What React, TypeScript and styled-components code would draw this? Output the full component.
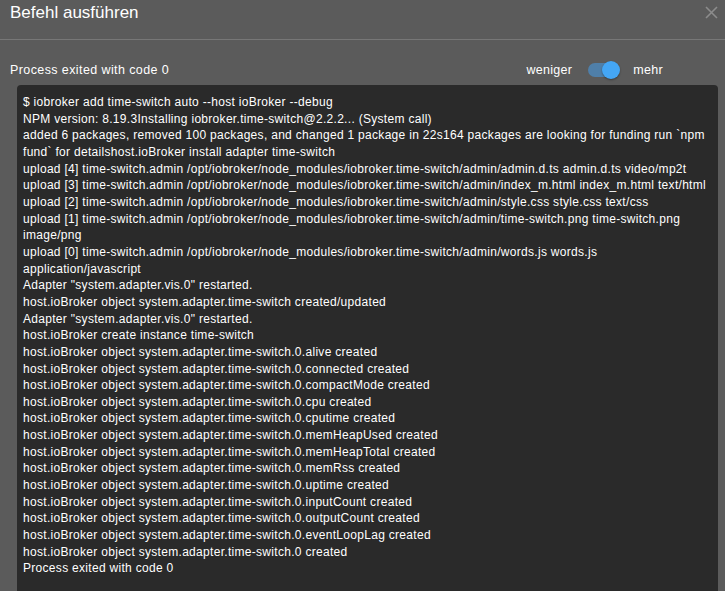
import styled, { createGlobalStyle } from 'styled-components';

const GlobalStyle = createGlobalStyle`
  html, body {
    margin: 0;
    padding: 0;
    background: #5b5b5b;
    overflow: hidden;
  }
  * { box-sizing: border-box; }
`;

const Dialog = styled.div`
  width: 725px;
  height: 591px;
  background: #5b5b5b;
  font-family: "Liberation Sans", Arial, sans-serif;
  color: #ffffff;
  display: flex;
  flex-direction: column;
  overflow: hidden;
`;

const Header = styled.div`
  height: 40px;
  border-bottom: 1px solid #777777;
  display: flex;
  align-items: flex-start;
  justify-content: space-between;
  padding: 3px 4px 0 10px;
`;

const Title = styled.h2`
  margin: 0;
  font-size: 17px;
  font-weight: 400;
  line-height: 20px;
`;

const Close = styled.button`
  background: none;
  border: none;
  padding: 2px;
  cursor: pointer;
  display: flex;
`;

const Body = styled.div`
  flex: 1;
  display: flex;
  flex-direction: column;
  padding: 0 7px 0 17px;
  min-height: 0;
`;

const StatusRow = styled.div`
  height: 45px;
  display: flex;
  align-items: center;
  justify-content: space-between;
  padding-top: 15px;
`;

const Status = styled.span`
  font-size: 12.5px;
  letter-spacing: 0.4px;
  margin-left: -7px;
`;

const Toggle = styled.div`
  display: flex;
  align-items: center;
  font-size: 12.5px;
  letter-spacing: 0.3px;
  margin-right: 55px;
`;

const Track = styled.div`
  position: relative;
  width: 31px;
  height: 14px;
  border-radius: 7px;
  background: #4f7fa9;
  margin: 0 14px 0 16px;
`;

const Thumb = styled.div`
  position: absolute;
  top: -2px;
  right: -1px;
  width: 18px;
  height: 18px;
  border-radius: 50%;
  background: #44a6f5;
  box-shadow: 0 1px 2px rgba(0, 0, 0, 0.35);
`;

const Log = styled.pre`
  margin: 0;
  flex: 1;
  background: #2a2a2a;
  border-radius: 4px 4px 0 0;
  padding: 9px 6px 0 6px;
  font-family: "Liberation Sans", Arial, sans-serif;
  font-size: 12px;
  letter-spacing: 0.3px;
  line-height: 16.65px;
  color: #ffffff;
  white-space: pre-wrap;
  word-break: break-word;
  overflow: hidden;
`;

const lines = [
  '$ iobroker add time-switch auto --host ioBroker --debug',
  'NPM version: 8.19.3Installing iobroker.time-switch@2.2.2... (System call)',
  'added 6 packages, removed 100 packages, and changed 1 package in 22s164 packages are looking for funding run `npm fund` for detailshost.ioBroker install adapter time-switch',
  'upload [4] time-switch.admin /opt/iobroker/node_modules/iobroker.time-switch/admin/admin.d.ts admin.d.ts video/mp2t',
  'upload [3] time-switch.admin /opt/iobroker/node_modules/iobroker.time-switch/admin/index_m.html index_m.html text/html',
  'upload [2] time-switch.admin /opt/iobroker/node_modules/iobroker.time-switch/admin/style.css style.css text/css',
  'upload [1] time-switch.admin /opt/iobroker/node_modules/iobroker.time-switch/admin/time-switch.png time-switch.png image/png',
  'upload [0] time-switch.admin /opt/iobroker/node_modules/iobroker.time-switch/admin/words.js words.js application/javascript',
  'Adapter "system.adapter.vis.0" restarted.',
  'host.ioBroker object system.adapter.time-switch created/updated',
  'Adapter "system.adapter.vis.0" restarted.',
  'host.ioBroker create instance time-switch',
  'host.ioBroker object system.adapter.time-switch.0.alive created',
  'host.ioBroker object system.adapter.time-switch.0.connected created',
  'host.ioBroker object system.adapter.time-switch.0.compactMode created',
  'host.ioBroker object system.adapter.time-switch.0.cpu created',
  'host.ioBroker object system.adapter.time-switch.0.cputime created',
  'host.ioBroker object system.adapter.time-switch.0.memHeapUsed created',
  'host.ioBroker object system.adapter.time-switch.0.memHeapTotal created',
  'host.ioBroker object system.adapter.time-switch.0.memRss created',
  'host.ioBroker object system.adapter.time-switch.0.uptime created',
  'host.ioBroker object system.adapter.time-switch.0.inputCount created',
  'host.ioBroker object system.adapter.time-switch.0.outputCount created',
  'host.ioBroker object system.adapter.time-switch.0.eventLoopLag created',
  'host.ioBroker object system.adapter.time-switch.0 created',
  'Process exited with code 0',
];

export default function App() {
  return (
    <Dialog>
      <GlobalStyle />
      <Header>
        <Title>Befehl ausführen</Title>
        <Close aria-label="close">
          <svg width="15" height="15" viewBox="0 0 15 15">
            <path d="M2 2 L13 13 M13 2 L2 13" stroke="#8c8c8c" strokeWidth="1.6" />
          </svg>
        </Close>
      </Header>
      <Body>
        <StatusRow>
          <Status>Process exited with code 0</Status>
          <Toggle>
            <span>weniger</span>
            <Track>
              <Thumb />
            </Track>
            <span>mehr</span>
          </Toggle>
        </StatusRow>
        <Log>{lines.join('\n')}</Log>
      </Body>
    </Dialog>
  );
}
